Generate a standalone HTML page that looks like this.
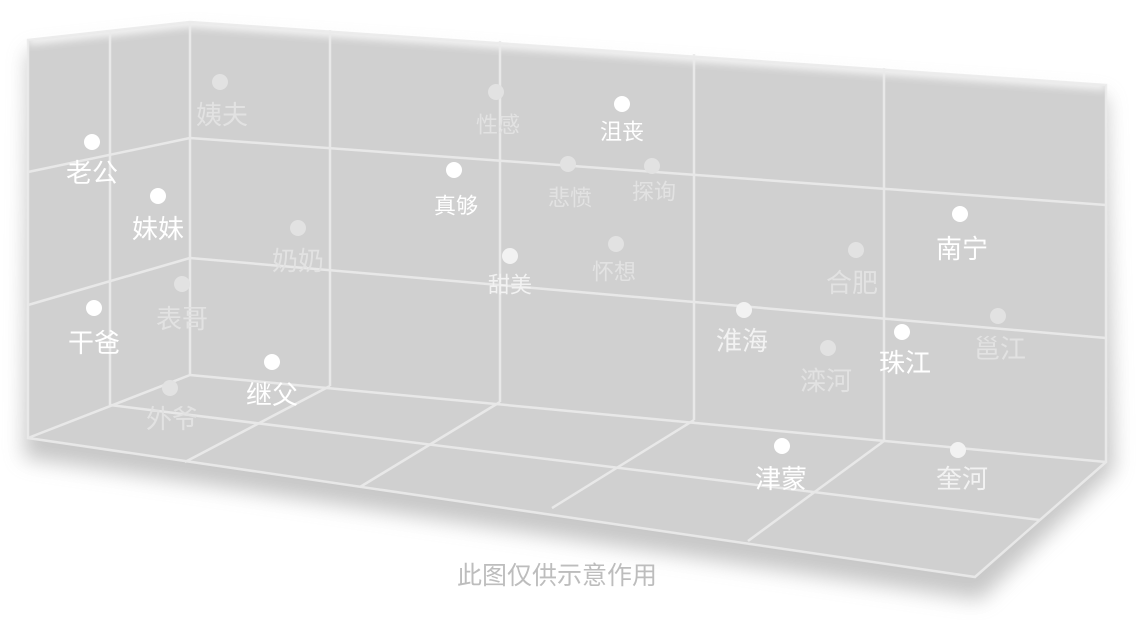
<!DOCTYPE html>
<html><head><meta charset="utf-8"><style>
html,body{margin:0;padding:0;background:#fff;}
svg{display:block;}
text{font-family:"Liberation Sans","Noto Sans CJK SC",sans-serif;text-anchor:middle;dominant-baseline:central;}
</style></head><body>
<svg width="1140" height="620" viewBox="0 0 1140 620" xmlns="http://www.w3.org/2000/svg">
<defs>
<filter id="sh" x="-10%" y="-10%" width="120%" height="130%">
<feGaussianBlur stdDeviation="10"/>
</filter>
<filter id="gl" x="-5%" y="-50%" width="110%" height="200%"><feGaussianBlur stdDeviation="4"/></filter>
</defs>
<polygon points="28,52 190,34 1106,97 1114,470 980,600 24,458" fill="#9a9a9a" opacity="0.55" filter="url(#sh)"/>
<polygon points="28,40 190,22 1106,85 1106,462 975,577 28,438" fill="#d0d0d0"/>
<polyline points="28,40 190,22 1106,85" fill="none" stroke="#fff" stroke-width="10" opacity="0.8" filter="url(#gl)"/>
<g stroke="#ebebeb" stroke-width="2.5" fill="none" opacity="0.9">
<polygon points="28,40 190,22 1106,85 1106,462 975,577 28,438"/>
<line x1="190" y1="22" x2="190" y2="375"/>
<line x1="190" y1="375" x2="1106" y2="462"/>
<line x1="190" y1="375" x2="28" y2="438"/>
<line x1="110" y1="32" x2="110" y2="405"/>
<line x1="28" y1="172" x2="190" y2="138"/>
<line x1="28" y1="305" x2="190" y2="258"/>
<line x1="190" y1="138" x2="1106" y2="205"/>
<line x1="190" y1="258" x2="1106" y2="338"/>
<line x1="330" y1="30" x2="330" y2="386"/>
<line x1="500" y1="41" x2="500" y2="402"/>
<line x1="694" y1="54" x2="694" y2="420"/>
<line x1="884" y1="68" x2="884" y2="441"/>
<line x1="110" y1="405" x2="1040" y2="520"/>
<line x1="330" y1="386" x2="185" y2="462"/>
<line x1="500" y1="402" x2="360" y2="487"/>
<line x1="694" y1="420" x2="552" y2="508"/>
<line x1="884" y1="441" x2="748" y2="541"/>
</g>
<g fill="#fff">
<circle cx="92" cy="142" r="8"/><circle cx="158" cy="196" r="8"/><circle cx="94" cy="308" r="8"/>
<circle cx="272" cy="362" r="8"/><circle cx="454" cy="170" r="8"/><circle cx="622" cy="104" r="8"/>
<circle cx="960" cy="214" r="8"/><circle cx="902" cy="332" r="8"/><circle cx="782" cy="446" r="8"/>
</g>
<g fill="#f2f2f2"><circle cx="744" cy="310" r="8"/><circle cx="958" cy="450" r="8"/><circle cx="510" cy="256" r="8"/></g>
<g fill="#e2e2e2">
<circle cx="182" cy="284" r="8"/><circle cx="170" cy="388" r="8"/><circle cx="298" cy="228" r="8"/>
<circle cx="220" cy="82" r="8"/><circle cx="496" cy="92" r="8"/><circle cx="568" cy="164" r="8"/>
<circle cx="652" cy="166" r="8"/><circle cx="616" cy="244" r="8"/><circle cx="828" cy="348" r="8"/>
<circle cx="856" cy="250" r="8"/><circle cx="998" cy="316" r="8"/>
</g>
<g fill="#fff" font-size="26">
<text x="92" y="173">老公</text><text x="158" y="229">妹妹</text><text x="94" y="343">干爸</text>
<text x="272" y="395">继父</text><text x="962" y="249">南宁</text><text x="905" y="363">珠江</text>
<text x="781" y="479">津蒙</text>
</g>
<g fill="#fff" font-size="22"><text x="456" y="206">真够</text><text x="622" y="132">沮丧</text></g>
<g fill="#f2f2f2" font-size="26"><text x="742" y="341">淮海</text><text x="962" y="479">奎河</text></g>
<g fill="#f2f2f2" font-size="22"><text x="510" y="285">甜美</text></g>
<g fill="#e2e2e2" font-size="26">
<text x="182" y="319">表哥</text><text x="172" y="419">外爷</text><text x="298" y="261">奶奶</text>
<text x="222" y="115">姨夫</text><text x="826" y="381">滦河</text><text x="852" y="283">合肥</text>
<text x="1000" y="349">邕江</text>
</g>
<g fill="#e2e2e2" font-size="22">
<text x="498" y="125">性感</text><text x="570" y="198">悲愤</text><text x="654" y="192">探询</text><text x="614" y="272">怀想</text>
</g>
<text x="557" y="576" font-size="25" fill="#bdbdbd">此图仅供示意作用</text>
</svg>
</body></html>
